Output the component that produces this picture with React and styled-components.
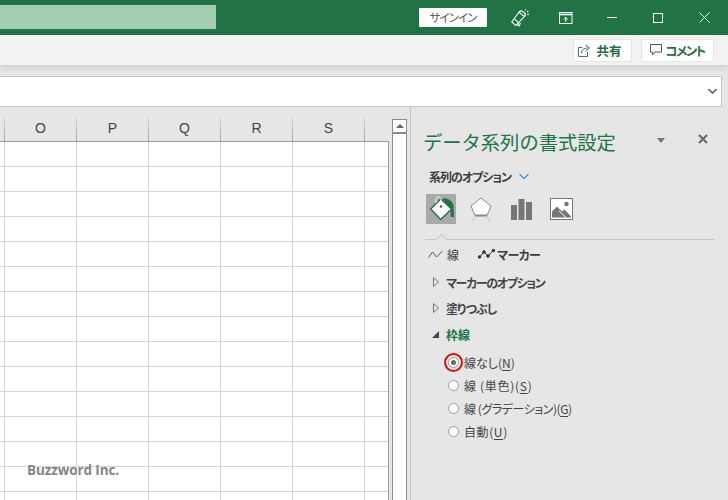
import styled, { createGlobalStyle } from "styled-components";

const GlobalStyle = createGlobalStyle`
  html, body {
    margin: 0;
    padding: 0;
    width: 728px;
    height: 500px;
    overflow: hidden;
  }
  body {
    font-family: "Noto Sans CJK JP", "Noto Sans", sans-serif;
    font-feature-settings: "palt";
    color: #444;
  }
`;

const Page = styled.div`
  width: 728px;
  height: 500px;
  display: flex;
  flex-direction: column;
  background: #e6e6e6;
  overflow: hidden;
`;

const TitleBar = styled.div`
  height: 35px;
  flex: none;
  background: #217346;
  display: flex;
  align-items: center;
  justify-content: space-between;
`;

const SearchBox = styled.div`
  width: 216px;
  height: 24px;
  margin-top: -0.5px;
  background: #a3ceb4;
`;

const TitleActions = styled.div`
  display: flex;
  align-items: center;
  padding-right: 1px;
`;

const SignIn = styled.button`
  width: 68px;
  height: 19px;
  margin-right: 10px;
  padding: 0;
  border: none;
  border-radius: 1px;
  background: #fff;
  color: #555;
  font: 400 11.5px "Noto Sans CJK JP", sans-serif;
  font-feature-settings: "palt";
  letter-spacing: -0.9px;
  line-height: 19px;
`;

const WinIcon = styled.div`
  width: 46px;
  height: 20px;
  display: flex;
  align-items: center;
  justify-content: center;
`;

const Ribbon = styled.div`
  height: 30px;
  flex: none;
  background: #f3f2f1;
  display: flex;
  align-items: center;
  justify-content: flex-end;
  gap: 9px;
  padding-right: 14px;
  box-sizing: border-box;
  box-shadow: 0 2px 6px rgba(0, 0, 0, 0.12);
  position: relative;
`;

const RibbonButton = styled.button`
  height: 23px;
  width: ${(p) => p.$w}px;
  padding: 0 ${(p) => p.$nudge || 0}px 0 0;
  display: flex;
  align-items: center;
  justify-content: center;
  gap: ${(p) => p.$gap}px;
  border: 1px solid #e6e4e2;
  border-radius: 2px;
  background: #fff;
  color: #2b6b49;
  font: 700 12.5px "Noto Sans CJK JP", sans-serif;
  font-feature-settings: "palt";
  letter-spacing: ${(p) => p.$track || 0}px;
`;

const FormulaBar = styled.div`
  height: 31px;
  flex: none;
  margin-top: 11px;
  margin-right: 6px;
  box-sizing: border-box;
  background: #fff;
  border: 1px solid #c6c6c6;
  border-left: none;
  display: flex;
  align-items: center;
  justify-content: flex-end;
  padding-right: 4px;
`;

const Workspace = styled.div`
  flex: 1;
  min-height: 0;
  display: flex;
  padding-top: 10px;
`;

const Sheet = styled.div`
  width: 389px;
  flex: none;
  position: relative;
`;

const HeaderRow = styled.div`
  height: 25px;
  display: grid;
  grid-template-columns: 4.5px repeat(5, 72px) 24.5px;
  border-bottom: 1px solid #9c9c9c;
  box-sizing: border-box;
`;

const HeaderCell = styled.div`
  display: flex;
  align-items: center;
  justify-content: center;
  padding: 0 0 2px 1px;
  border-right: ${(p) => (p.$last ? "none" : "1px solid #a8a8a8")};
  border-image: ${(p) => (p.$last ? "none" : "linear-gradient(#dcdcdc, #9c9c9c) 1")};
  color: #444;
  font: 400 14px "Liberation Sans", Arial, sans-serif;
`;

const Grid = styled.div`
  background: #fff;
  border-right: 1px solid #9c9c9c;
  height: 358px;
  overflow: hidden;
`;

const GridRow = styled.div`
  height: 25px;
  display: grid;
  grid-template-columns: 4.5px repeat(5, 72px) 1fr;
  box-sizing: border-box;
  border-bottom: 1px solid #d4d4d4;
`;

const Cell = styled.div`
  border-right: 1px solid #d4d4d4;
  &:last-child {
    border-right: none;
  }
`;

const Watermark = styled.div`
  position: absolute;
  left: 27px;
  top: 344px;
  color: #868686;
  font: 700 13.5px "Open Sans", "Noto Sans", sans-serif;
  letter-spacing: -0.1px;
  white-space: nowrap;
`;

const ScrollTrack = styled.div`
  width: 15px;
  flex: none;
  margin: 2px 3px 0 3px;
  box-sizing: border-box;
  background: #fff;
  border: 1px solid #8a8a8a;
  border-bottom: none;
`;

const ScrollUp = styled.div`
  height: 14px;
  box-sizing: border-box;
  border-bottom: 2px solid #8a8a8a;
  display: flex;
  align-items: center;
  justify-content: center;
  &::before {
    content: "";
    border-left: 4px solid transparent;
    border-right: 4px solid transparent;
    border-bottom: 4px solid #666;
  }
`;

const Panel = styled.div`
  flex: 1;
  min-width: 0;
  box-sizing: border-box;
  margin-top: -10px;
  border-left: 1px solid #c4c4c4;
  padding: 20px 0 0 12px;
  background: #e6e6e6;
`;

const PanelHead = styled.div`
  display: flex;
  align-items: center;
  height: 30px;
`;

const PanelTitle = styled.h2`
  margin: 0;
  width: 234px;
  color: #217346;
  font: 400 19.3px "Noto Sans CJK JP", sans-serif;
  font-feature-settings: normal;
  white-space: nowrap;
`;

const MenuCaret = styled.span`
  border-left: 4.5px solid transparent;
  border-right: 4.5px solid transparent;
  border-top: 5px solid #777;
  margin-top: -3px;
`;

const CloseButton = styled.span`
  display: flex;
  margin-left: 33px;
  margin-top: -7px;
`;

const OptionsLabel = styled.div`
  display: flex;
  align-items: center;
  height: 18px;
  margin: 10px 0 0 6px;
  color: #3c3c3c;
  font-size: 12px;
  font-weight: 700;
`;

const OptionsText = styled.span`
  letter-spacing: -1px;
  margin-right: 8px;
`;

const IconTabs = styled.div`
  display: flex;
  margin: 9px 0 0 3px;
  gap: 10px;
`;

const IconTab = styled.div`
  width: 30px;
  height: 30px;
  display: flex;
  align-items: center;
  justify-content: center;
  background: ${(p) => (p.$active ? "#a9a9a9" : "transparent")};
`;

const TabRule = styled.div`
  position: relative;
  width: 289px;
  height: 1px;
  margin: 15px 0 0 2px;
  background: #c6c6c6;
  &::before {
    content: "";
    position: absolute;
    left: 12px;
    top: -4px;
    width: 8px;
    height: 8px;
    background: #e6e6e6;
    border-left: 1px solid #c6c6c6;
    border-top: 1px solid #c6c6c6;
    transform: rotate(45deg) scale(0.9);
  }
`;

const SubTabs = styled.div`
  display: flex;
  align-items: center;
  height: 20px;
  margin: 4px 0 5px 5px;
  font-size: 12px;
`;

const SubTab = styled.div`
  display: flex;
  align-items: center;
  gap: ${(p) => p.$gap}px;
  width: ${(p) => p.$w}px;
  font-weight: ${(p) => (p.$bold ? 700 : 400)};
  letter-spacing: ${(p) => p.$track || 0}px;
  color: #3c3c3c;
`;

const Section = styled.div`
  display: flex;
  align-items: center;
  height: 26px;
  margin-left: 9px;
  gap: 7px;
  color: ${(p) => (p.$open ? "#217346" : "#444")};
  font-size: 12px;
  font-weight: 700;
  letter-spacing: ${(p) => p.$track || 0}px;
`;

const SectionArrow = styled.span`
  width: 7px;
  display: flex;
  justify-content: center;
`;

const RadioList = styled.div`
  margin: 4px 0 0 25px;
  display: flex;
  flex-direction: column;
`;

const RadioRow = styled.label`
  display: flex;
  align-items: center;
  gap: 5px;
  height: 23px;
  color: #444;
  font-size: 12px;
  letter-spacing: ${(p) => p.$track || 0}px;
`;

const RadioDot = styled.span`
  width: 11px;
  height: 11px;
  flex: none;
  position: relative;
  box-sizing: border-box;
  border: 1px solid #9a9a9a;
  border-radius: 50%;
  background: #fff;
  display: flex;
  align-items: center;
  justify-content: center;
  &::before {
    content: "";
    display: ${(p) => (p.$checked ? "block" : "none")};
    width: 5px;
    height: 5px;
    border-radius: 50%;
    background: #666;
  }
  &::after {
    content: "";
    display: ${(p) => (p.$marked ? "block" : "none")};
    position: absolute;
    inset: -5px;
    border: 2px solid #d0121b;
    border-radius: 50%;
  }
`;

const Key = styled.span`
  text-decoration: underline;
  text-underline-offset: 2px;
`;

const columns = ["", "O", "P", "Q", "R", "S", ""];
const rows = Array.from({ length: 15 }, (_, i) => i);

const radios = [
  { label: "線なし", key: "N", checked: true, track: 0 },
  { label: "線 (単色)", key: "S", track: 0.7 },
  { label: "線 (グラデーション)", key: "G", track: -0.45 },
  { label: "自動", key: "U", track: 0.6 },
];

const Pen = () => (
  <svg width="18" height="18" viewBox="0 0 18 18" fill="none" stroke="#fff" strokeWidth="1.1">
    <path d="M8.5 2.5.8 13l4 3.6L14 6.8" />
    <path d="M8.5 2.5c1.500-1.200 3.200-.3 4.500 1s2 2.800 1 3.300c-1.500.5-2.800-.5-3.800-1.600S8 3.200 8.500 2.500Z" />
    <path d="M3.600 10.200l4 3.400M7.400 13.200l-1 2.800 2 .8.9-3" />
    <path d="M14.600 1.200 15 .2M16 3l1.400-.8M16.200 5.400h1.600" />
  </svg>
);

const DisplayOptions = () => (
  <svg width="14" height="12" viewBox="0 0 14 12" fill="none" stroke="#fff" strokeWidth="1">
    <rect x=".5" y=".5" width="12.500" height="11" />
    <path d="M.5 2.500h12.500" strokeWidth="1.600" />
    <path d="M6.750 10V5.500M4.700 7.500l2.050-2 2.050 2" />
  </svg>
);

const Minimize = () => (
  <svg width="10" height="10" viewBox="0 0 10 10" stroke="#fff" strokeWidth="1">
    <path d="M0 4.500h10" />
  </svg>
);

const Maximize = () => (
  <svg width="10" height="10" viewBox="0 0 10 10" fill="none" stroke="#fff" strokeWidth="1">
    <rect x=".5" y=".5" width="9" height="9" />
  </svg>
);

const CloseX = () => (
  <svg width="11" height="11" viewBox="0 0 11 11" stroke="#fff" strokeWidth="1">
    <path d="M.5.5l10 10M10.500.5l-10 10" />
  </svg>
);

const Share = () => (
  <svg width="13" height="13" viewBox="0 0 13 13" fill="none" stroke="#666" strokeWidth="1">
    <path d="M4.500 3.500H.5v9h9V8" />
    <path d="M3.500 9c0-3 2.500-5 6-5M7.500.8l4 3.200-4 3.200" stroke="#2b6b49" />
  </svg>
);

const Comment = () => (
  <svg width="12" height="12" viewBox="0 0 12 12" fill="none" stroke="#555" strokeWidth="1">
    <path d="M.5.5h11v7.500H5L2.500 11V8H.5Z" />
  </svg>
);

const Chevron = ({ color = "#666", size = 9, width = 1.6 }) => (
  <svg width={size} height={size * 0.67} viewBox="0 0 9 6" fill="none" stroke={color} strokeWidth={width}>
    <path d="M.5 1 4.500 5l4-4" />
  </svg>
);

const PaneClose = () => (
  <svg width="10" height="10" viewBox="0 0 10 10" stroke="#666" strokeWidth="2">
    <path d="M1 1l8 8M9 1l-8 8" />
  </svg>
);

const FillIcon = () => (
  <svg width="30" height="30" viewBox="0 0 30 30">
    <path d="M16 4.500C21 3.500 26 6.500 27.500 11L28 23h-3l-.5-6 1-2-5.500-5.500Z" fill="#217346" />
    <path d="M14.700 5 25.500 15 14.700 25.500 4.700 15Z" fill="#fff" stroke="#2b6e48" strokeWidth="1.400" />
    <path d="M10 9V5.500c0-3.500 5-3.500 5 0V12" fill="none" stroke="#fff" strokeWidth="1" />
    <circle cx="15" cy="12.500" r="1.300" fill="#555" />
  </svg>
);

const MarkerIcon = () => (
  <svg width="22" height="24" viewBox="0 0 22 24">
    <path d="M11 1 21 9 17 18.500H5L1 9Z" fill="#fff" stroke="#8a8a8a" strokeWidth="1" />
    <path d="M5 18.500h12" stroke="#8a8a8a" strokeWidth="2" />
    <path d="M4.500 20 2.500 24M17.500 20l2 4" stroke="#cfcfcf" strokeWidth="1.500" fill="none" />
  </svg>
);

const BarsIcon = () => (
  <svg width="21" height="21" viewBox="0 0 21 21" fill="#767676">
    <rect x="0" y="6" width="6" height="15" />
    <rect x="7.500" y="0" width="6" height="21" />
    <rect x="15" y="3" width="6" height="18" />
  </svg>
);

const PictureIcon = () => (
  <svg width="23" height="22" viewBox="0 0 23 22">
    <rect x=".5" y=".5" width="22" height="21" fill="#fff" stroke="#767676" />
    <circle cx="16.500" cy="6" r="2.200" fill="#767676" />
    <path d="M2 19.500v-6l5-5 5 5 2.500-2 6.500 7v1Z" fill="#767676" />
    <path d="M9 13l7 6.500" stroke="#fff" strokeWidth="1" />
  </svg>
);

const LineIcon = () => (
  <svg width="15" height="9" viewBox="0 0 15 9" fill="none" stroke="#555" strokeWidth="1">
    <path d="M.5 7.500 4.500 2l4 5 6-6" />
  </svg>
);

const MarkerLineIcon = () => (
  <svg width="17" height="10" viewBox="0 0 17 10" fill="#333" stroke="#333" strokeWidth="1">
    <path d="M1.500 8 6 3l4 4 5.500-6" fill="none" />
    <circle cx="1.500" cy="8" r="1.300" />
    <circle cx="6" cy="3" r="1.300" />
    <circle cx="10" cy="7" r="1.300" />
    <circle cx="15.500" cy="1.500" r="1.300" />
  </svg>
);

const Collapsed = () => (
  <svg width="6" height="10" viewBox="0 0 6 10" fill="#e6e6e6" stroke="#777" strokeWidth="1">
    <path d="M.5.5 5.500 5 .5 9.500Z" />
  </svg>
);

const Expanded = () => (
  <svg width="7" height="7" viewBox="0 0 7 7" fill="#444">
    <path d="M7 0v7H0Z" />
  </svg>
);

export default function App() {
  return (
    <Page>
      <GlobalStyle />
      <TitleBar>
        <SearchBox />
        <TitleActions>
          <SignIn>サインイン</SignIn>
          <WinIcon><Pen /></WinIcon>
          <WinIcon><DisplayOptions /></WinIcon>
          <WinIcon><Minimize /></WinIcon>
          <WinIcon><Maximize /></WinIcon>
          <WinIcon><CloseX /></WinIcon>
        </TitleActions>
      </TitleBar>
      <Ribbon>
        <RibbonButton $w={59} $gap={5} $nudge={5}><Share />共有</RibbonButton>
        <RibbonButton $w={73} $gap={3} $track={-1.5}><Comment />コメント</RibbonButton>
      </Ribbon>
      <FormulaBar>
        <Chevron />
      </FormulaBar>
      <Workspace>
        <Sheet>
          <HeaderRow>
            {columns.map((c, i) => (
              <HeaderCell key={i} $last={i === columns.length - 1}>{c}</HeaderCell>
            ))}
          </HeaderRow>
          <Grid>
            {rows.map((r) => (
              <GridRow key={r}>
                {columns.map((_, i) => <Cell key={i} />)}
              </GridRow>
            ))}
          </Grid>
          <Watermark>Buzzword Inc.</Watermark>
        </Sheet>
        <ScrollTrack>
          <ScrollUp />
        </ScrollTrack>
        <Panel>
          <PanelHead>
            <PanelTitle>データ系列の書式設定</PanelTitle>
            <MenuCaret />
            <CloseButton><PaneClose /></CloseButton>
          </PanelHead>
          <OptionsLabel>
            <OptionsText>系列のオプション</OptionsText>
            <Chevron color="#4a90c8" size={10} width={1.2} />
          </OptionsLabel>
          <IconTabs>
            <IconTab $active><FillIcon /></IconTab>
            <IconTab><MarkerIcon /></IconTab>
            <IconTab><BarsIcon /></IconTab>
            <IconTab><PictureIcon /></IconTab>
          </IconTabs>
          <TabRule />
          <SubTabs>
            <SubTab $w={50} $gap={4}><LineIcon />線</SubTab>
            <SubTab $w={70} $gap={2} $bold $track={-0.5}><MarkerLineIcon />マーカー</SubTab>
          </SubTabs>
          <Section $track={-1.3}><SectionArrow><Collapsed /></SectionArrow>マーカーのオプション</Section>
          <Section $track={-1}><SectionArrow><Collapsed /></SectionArrow>塗りつぶし</Section>
          <Section $open><SectionArrow><Expanded /></SectionArrow>枠線</Section>
          <RadioList>
            {radios.map((r) => (
              <RadioRow key={r.key} $track={r.track}>
                <RadioDot $checked={r.checked} $marked={r.checked} />
                <span>{r.label}(<Key>{r.key}</Key>)</span>
              </RadioRow>
            ))}
          </RadioList>
        </Panel>
      </Workspace>
    </Page>
  );
}
